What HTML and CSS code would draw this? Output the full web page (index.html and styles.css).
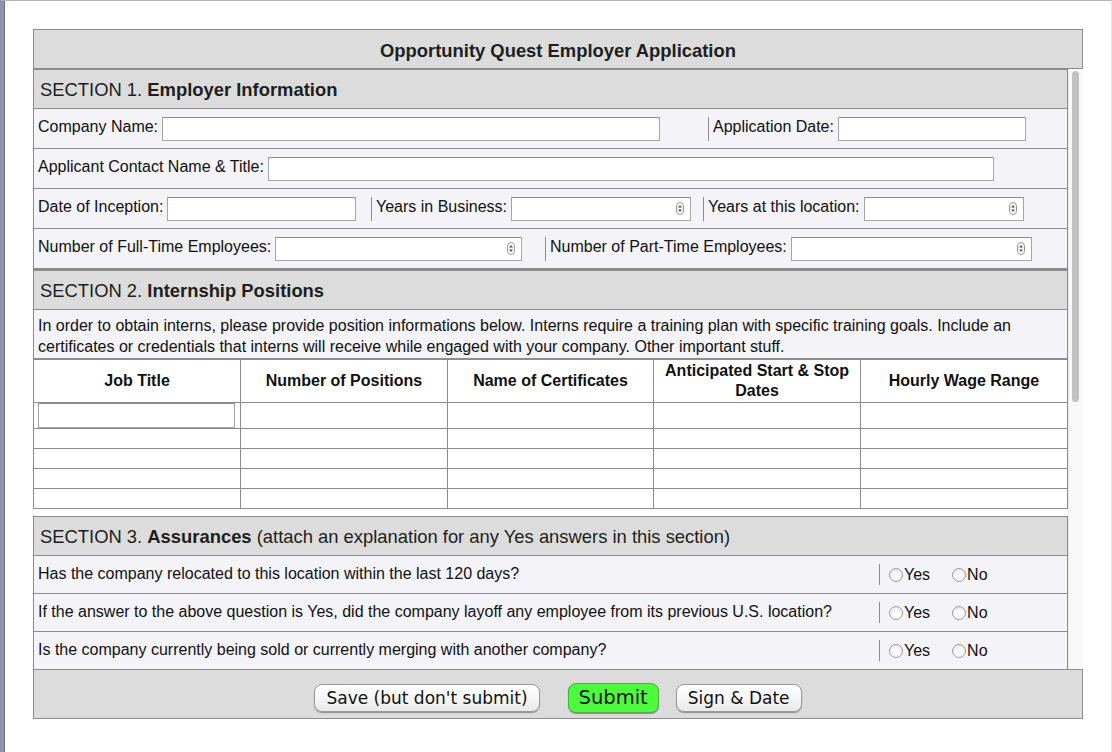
FILE: index.html
```html
<!DOCTYPE html>
<html lang="en">
<head>
<meta charset="utf-8">
<title>Opportunity Quest Employer Application</title>
<link rel="stylesheet" href="styles.css">
</head>
<body>
<div class="frame">
  <form class="app">
    <div class="title">Opportunity Quest Employer Application</div>
    <div class="body-area">
      <div class="viewport">
        <section class="section">
          <div class="sec-head">SECTION 1.&nbsp;<b>Employer Information</b></div>
          <div class="row">
            <div class="field w670"><label>Company Name:</label><input class="inp" type="text" style="width:498px"></div>
            <div class="field sep"><label>Application Date:</label><input class="inp" type="text" style="width:188px"></div>
          </div>
          <div class="row">
            <div class="field"><label>Applicant Contact Name &amp; Title:</label><input class="inp" type="text" style="width:726px"></div>
          </div>
          <div class="row">
            <div class="field w333"><label>Date of Inception:</label><input class="inp" type="text" style="width:189px"></div>
            <div class="field sep w332"><label>Years in Business:</label><div class="inp spin" style="width:180px"><svg width="8" height="13" viewBox="0 0 8 13"><rect x="0.5" y="0.5" width="7" height="12" rx="3.5" fill="#fafafa" stroke="#9a9a9a"/><path d="M4 3 L6 5.5 H2Z M4 10 L6 7.5 H2Z" fill="#555"/></svg></div></div>
            <div class="field sep"><label>Years at this location:</label><div class="inp spin" style="width:160px"><svg width="8" height="13" viewBox="0 0 8 13"><rect x="0.5" y="0.5" width="7" height="12" rx="3.5" fill="#fafafa" stroke="#9a9a9a"/><path d="M4 3 L6 5.5 H2Z M4 10 L6 7.5 H2Z" fill="#555"/></svg></div></div>
          </div>
          <div class="row">
            <div class="field w507"><label>Number of Full-Time Employees:</label><div class="inp spin" style="width:247px"><svg width="8" height="13" viewBox="0 0 8 13"><rect x="0.5" y="0.5" width="7" height="12" rx="3.5" fill="#fafafa" stroke="#9a9a9a"/><path d="M4 3 L6 5.5 H2Z M4 10 L6 7.5 H2Z" fill="#555"/></svg></div></div>
            <div class="field sep"><label>Number of Part-Time Employees:</label><div class="inp spin" style="width:241px"><svg width="8" height="13" viewBox="0 0 8 13"><rect x="0.5" y="0.5" width="7" height="12" rx="3.5" fill="#fafafa" stroke="#9a9a9a"/><path d="M4 3 L6 5.5 H2Z M4 10 L6 7.5 H2Z" fill="#555"/></svg></div></div>
          </div>
        </section>

        <section class="section">
          <div class="sec-head">SECTION 2.&nbsp;<b>Internship Positions</b></div>
          <div class="desc">In order to obtain interns, please provide position informations below. Interns require a training plan with specific training goals. Include an certificates or credentials that interns will receive while engaged with your company. Other important stuff.</div>
          <table class="positions">
            <thead>
              <tr><th>Job Title</th><th>Number of Positions</th><th>Name of Certificates</th><th>Anticipated Start &amp; Stop Dates</th><th>Hourly Wage Range</th></tr>
            </thead>
            <tbody>
              <tr class="first"><td class="incell"><input class="inp cellinp" type="text"></td><td></td><td></td><td></td><td></td></tr>
              <tr><td></td><td></td><td></td><td></td><td></td></tr>
              <tr><td></td><td></td><td></td><td></td><td></td></tr>
              <tr><td></td><td></td><td></td><td></td><td></td></tr>
              <tr><td></td><td></td><td></td><td></td><td></td></tr>
            </tbody>
          </table>
        </section>

        <section class="section spaced">
          <div class="sec-head">SECTION 3.&nbsp;<b>Assurances</b>&nbsp;(attach an explanation for any Yes answers in this section)</div>
          <div class="q-row"><span class="q">Has the company relocated to this location within the last 120 days?</span><span class="yn"><label><input type="radio" name="q1">Yes</label><label class="no"><input type="radio" name="q1">No</label></span></div>
          <div class="q-row"><span class="q">If the answer to the above question is Yes, did the company layoff any employee from its previous U.S. location?</span><span class="yn"><label><input type="radio" name="q2">Yes</label><label class="no"><input type="radio" name="q2">No</label></span></div>
          <div class="q-row"><span class="q">Is the company currently being sold or currently merging with another company?</span><span class="yn"><label><input type="radio" name="q3">Yes</label><label class="no"><input type="radio" name="q3">No</label></span></div>
        </section>
      </div>
      <div class="sbar"><div class="thumb"></div></div>
    </div>
    <div class="footer">
      <button type="button" class="btn save">Save (but don't submit)</button>
      <button type="button" class="btn submit">Submit</button>
      <button type="button" class="btn sign">Sign &amp; Date</button>
    </div>
  </form>
</div>
</body>
</html>
```
FILE: styles.css
```css
html, body {
  margin: 0;
  padding: 0;
  background: #ffffff;
}

.frame {
  box-sizing: border-box;
  width: 1112px;
  height: 752px;
  border-left: 4px solid #9191ae;
  border-top: 1px solid #b4b4b4;
  border-right: 1px solid #e4e4e4;
  box-shadow: inset 1px 0 0 #70708c;
  padding: 28px 0 0 29px;
  font-family: "Liberation Sans", Arial, Helvetica, sans-serif;
  font-size: 16px;
  color: #111;
}

.app {
  width: 1050px;
  margin: 0;
}

.title {
  box-sizing: border-box;
  height: 40px;
  padding-top: 3px;
  border: 1px solid #8c8c8c;
  background: #dcdcdc;
  display: flex;
  align-items: center;
  justify-content: center;
  font-weight: bold;
  font-size: 18.4px;
  color: #1e1e1e;
}

.body-area {
  display: flex;
  height: 600px;
  background: #ffffff;
}

.viewport {
  width: 1035px;
  height: 600px;
  overflow: hidden;
}

.sbar {
  box-sizing: border-box;
  width: 15px;
  height: 600px;
  background: #f8f8f8;
  border-left: 1px solid #ebebeb;
  padding: 2px 4px 0 3px;
}
.thumb {
  height: 331px;
  border-radius: 4px;
  background: #c2c2c2;
}

.section {
  border: 1px solid #8c8c8c;
  background: #f3f3f8;
}
.section.spaced {
  margin-top: 7px;
}

.sec-head {
  box-sizing: border-box;
  height: 39px;
  padding: 2px 0 0 6px;
  background: #dcdcdc;
  border-bottom: 1px solid #8c8c8c;
  display: flex;
  align-items: center;
  font-size: 18.4px;
  color: #1e1e1e;
  white-space: nowrap;
}

.row {
  height: 39px;
  display: flex;
  align-items: center;
  padding-left: 4px;
  border-bottom: 1px solid #8c8c8c;
}

.field {
  display: flex;
  align-items: center;
  height: 24px;
  white-space: nowrap;
}
.field label {
  margin-right: 4px;
  padding-bottom: 3px;
}
.field.sep {
  border-left: 1px solid #8c8c8c;
  padding-left: 4px;
}
.w670 { width: 670px; }
.w333 { width: 333px; }
.w332 { box-sizing: border-box; width: 332px; }
.w507 { width: 507px; }

.inp {
  box-sizing: border-box;
  height: 24px;
  margin: 0;
  padding: 0 4px;
  border: 1px solid #a6a6a6;
  border-top-color: #8e8e8e;
  background: #ffffff;
  font-family: inherit;
  font-size: 15px;
  outline: none;
}

.spin {
  display: flex;
  align-items: center;
  justify-content: flex-end;
  padding-right: 6px;
}
.spin svg {
  display: block;
}

.desc {
  padding: 5px 4px 1px;
  line-height: 21px;
  border-bottom: 1px solid #8c8c8c;
}

.positions {
  width: 100%;
  border-collapse: collapse;
  table-layout: fixed;
  background: #ffffff;
}
.positions th,
.positions td {
  border: 1px solid #8c8c8c;
  padding: 0;
}
.positions th {
  height: 42px;
  font-weight: bold;
  text-align: center;
  line-height: 20px;
  padding: 0 8px;
  color: #111;
}
.positions td {
  height: 19px;
}
.positions tr.first td {
  height: 25px;
}
.positions th:first-child,
.positions td:first-child {
  border-left: none;
}
.positions th:last-child,
.positions td:last-child {
  border-right: none;
}
.positions tbody tr:last-child td {
  border-bottom: none;
}
.positions td.incell {
  padding: 0 0 0 4px;
}
.cellinp {
  display: block;
  width: 197px;
  height: 25px;
}

.q-row {
  height: 37px;
  display: flex;
  align-items: center;
  padding-left: 4px;
  border-bottom: 1px solid #8c8c8c;
}
.q-row:last-child {
  border-bottom: none;
}
.q {
  flex: 1;
  white-space: nowrap;
  padding-bottom: 2px;
}
.yn {
  box-sizing: border-box;
  width: 188px;
  height: 21px;
  display: flex;
  align-items: center;
  border-left: 1px solid #8c8c8c;
  padding-left: 9px;
}
.yn label {
  display: flex;
  align-items: center;
}
.yn label.no {
  margin-left: 22px;
}
.yn input {
  appearance: none;
  -webkit-appearance: none;
  box-sizing: border-box;
  width: 14px;
  height: 14px;
  margin: 0 1px 0 0;
  border-radius: 50%;
  border: 1px solid #9e9e9e;
  background: radial-gradient(circle at 50% 70%, #ffffff 0%, #f7f7f7 50%, #dedede 100%);
}

.footer {
  box-sizing: border-box;
  height: 50px;
  border: 1px solid #8c8c8c;
  background: #dcdcdc;
  display: flex;
  justify-content: center;
  align-items: center;
  padding-top: 7px;
}

.btn {
  box-sizing: border-box;
  height: 28px;
  padding: 0 11px;
  border: 1px solid #9a9a9a;
  border-radius: 8px;
  background: linear-gradient(#ffffff 0%, #f6f6f6 50%, #e9e9e9 100%);
  box-shadow: 0 1px 1px rgba(0, 0, 0, 0.35);
  font-family: "DejaVu Sans", "Lucida Grande", sans-serif;
  font-size: 17px;
  color: #111;
  line-height: 26px;
}
.btn.save {
  margin-right: 28px;
}
.btn.submit {
  height: 30px;
  padding: 0 10px;
  font-size: 19.5px;
  background: #4cfb3c;
  border-color: #55a94d;
}
.btn.sign {
  margin-left: 17px;
}
```
